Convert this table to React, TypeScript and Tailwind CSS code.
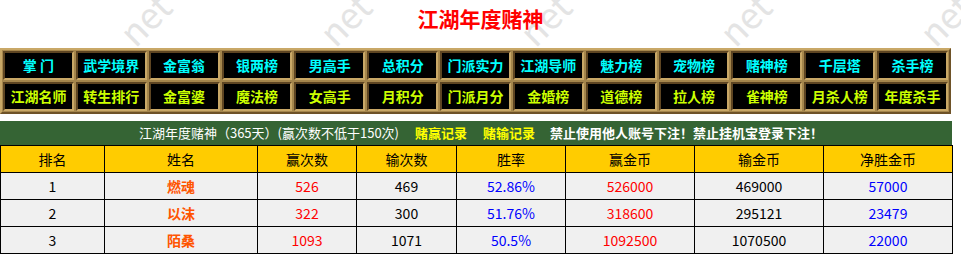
import {FC} from 'react'

const font = {fontFamily: '"Noto Sans CJK SC", "Noto Sans", sans-serif'}

const navTop = ['掌 门', '武学境界', '金富翁', '银两榜', '男高手', '总积分', '门派实力', '江湖导师', '魅力榜', '宠物榜', '赌神榜', '千层塔', '杀手榜']
const navBottom = ['江湖名师', '转生排行', '金富婆', '魔法榜', '女高手', '月积分', '门派月分', '金婚榜', '道德榜', '拉人榜', '雀神榜', '月杀人榜', '年度杀手']

const rows = [
  {rank: 1, name: '燃魂', win: 526, lose: 469, rate: '52.86%', winGold: 526000, loseGold: 469000, net: 57000},
  {rank: 2, name: '以沫', win: 322, lose: 300, rate: '51.76%', winGold: 318600, loseGold: 295121, net: 23479},
  {rank: 3, name: '陌桑', win: 1093, lose: 1071, rate: '50.5%', winGold: 1092500, loseGold: 1070500, net: 22000},
]

const heads = ['排名', '姓名', '赢次数', '输次数', '胜率', '赢金币', '输金币', '净胜金币']
const widths = ['w-[104px]', 'w-[153px]', 'w-[99px]', 'w-[100px]', 'w-[109px]', 'w-[129px]', 'w-[129px]', 'w-[129px]']

const NavCell: FC<{label: string, color: string}> = ({label, color}) => (
  <div className="flex h-[29px] items-center justify-center whitespace-pre border-t-[2px] border-l-[2px] border-b-[2px] border-r-[2px] border-t-[#5e4522] border-l-[#5e4522] border-b-[#c9a867] border-r-[#c9a867] bg-black text-[14px] font-bold" style={{color}}>
    {label}
  </div>
)

export default function App() {
  return (
    <div className="relative h-[254px] w-[961px] overflow-hidden bg-white" style={font}>
      {/* watermark, sits behind the page */}
      <div className="pointer-events-none absolute inset-0 select-none">
        {[116, 316, 516, 716, 916].map(x => (
          <span key={x} className="absolute top-[0px] -rotate-[45deg] text-[36px] font-normal leading-none text-[#e4e4e4]" style={{left: x}}>
            net
          </span>
        ))}
      </div>

      <div className="relative">
        <div className="flex h-[48px] justify-center pt-[6px]">
          <h1 className="text-[21px] font-bold leading-[24px] text-[#ff0000]">江湖年度赌神</h1>
        </div>

        <div className="w-[951px] border-t-[2px] border-l-[2px] border-b-[2px] border-r-[2px] border-t-[#c9a867] border-l-[#c9a867] border-b-[#6e5228] border-r-[#6e5228] bg-[#a5864c] p-[1px]">
          <div className="grid grid-cols-13 gap-[2px]">
            {navTop.map(n => <NavCell key={n} label={n} color="#00ffff"/>)}
            {navBottom.map(n => <NavCell key={n} label={n} color="#ccff00"/>)}
          </div>
        </div>

        <div className="mt-[7px] w-[952px]">
          <div className="flex h-[24px] items-center justify-center bg-[#356434] pl-[10px] text-[13px] text-white">
            <span>江湖年度赌神（365天）(赢次数不低于150次)</span>
            <span className="ml-[16px] font-bold text-[#ffff00]">赌赢记录</span>
            <span className="ml-[16px] font-bold text-[#ffff00]">赌输记录</span>
            <span className="ml-[15px] font-bold">禁止使用他人账号下注！禁止挂机宝登录下注！</span>
          </div>
          <table className="w-[952px] table-fixed border-collapse text-[14px]">
            <thead>
              <tr className="h-[27px] bg-[#ffcc00] text-black">
                {heads.map((h, i) => (
                  <th key={h} className={`${widths[i]} border border-black font-normal`}>{h}</th>
                ))}
              </tr>
            </thead>
            <tbody>
              {rows.map(r => (
                <tr key={r.rank} className="h-[27px] bg-[#f0f0f0] text-center">
                  <td className="border border-black text-black">{r.rank}</td>
                  <td className="border border-black font-bold text-[#ff5500]">{r.name}</td>
                  <td className="border border-black text-[#ff0000]">{r.win}</td>
                  <td className="border border-black text-black">{r.lose}</td>
                  <td className="border border-black text-[#0000ff]">{r.rate}</td>
                  <td className="border border-black text-[#ff0000]">{r.winGold}</td>
                  <td className="border border-black text-black">{r.loseGold}</td>
                  <td className="border border-black text-[#0000ff]">{r.net}</td>
                </tr>
              ))}
            </tbody>
          </table>
        </div>
      </div>
    </div>
  )
}
